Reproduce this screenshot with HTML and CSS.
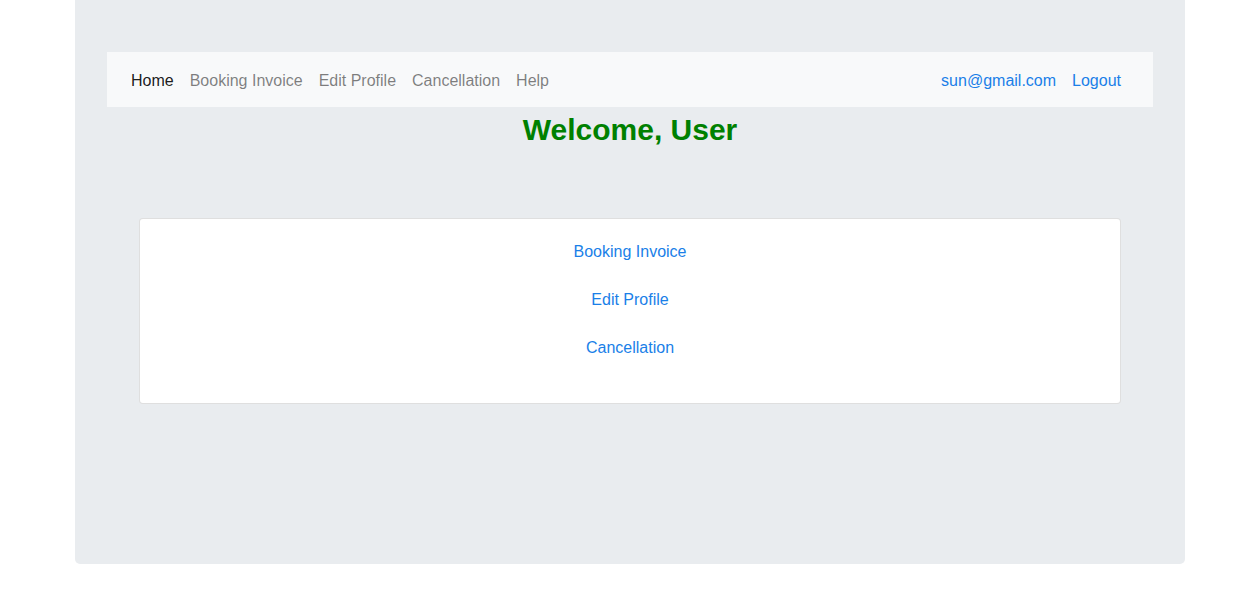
FILE: index.html
```html
<!DOCTYPE html>
<html>
<head>
<meta charset="utf-8">
<title>Welcome</title>
<link rel="stylesheet" href="styles.css">
</head>
<body>
<div class="page">
  <div class="jumbotron">
    <nav class="navbar">
      <ul class="nav-list">
        <li><a class="nav-link active" href="#">Home</a></li>
        <li><a class="nav-link" href="#">Booking Invoice</a></li>
        <li><a class="nav-link" href="#">Edit Profile</a></li>
        <li><a class="nav-link" href="#">Cancellation</a></li>
        <li><a class="nav-link" href="#">Help</a></li>
      </ul>
      <ul class="nav-list">
        <li><a class="nav-link blue" href="#">sun@gmail.com</a></li>
        <li><a class="nav-link blue" href="#">Logout</a></li>
      </ul>
    </nav>
    <h1 class="welcome">Welcome, User</h1>
    <div class="card">
      <div class="card-body">
        <a class="card-link" href="#">Booking Invoice</a>
        <a class="card-link" href="#">Edit Profile</a>
        <a class="card-link" href="#">Cancellation</a>
      </div>
    </div>
  </div>
</div>
</body>
</html>
```
FILE: styles.css
```css
* { box-sizing: border-box; }
html, body { margin: 0; padding: 0; background: #fff; }
body {
  font-family: "Liberation Sans", Arial, sans-serif;
  font-size: 16px;
  line-height: 24px;
  color: #212529;
}
.page {
  width: 1110px;
  margin-left: 75px;
}
.jumbotron {
  background: #e9ecef;
  border-radius: 0 0 5px 5px;
  padding: 52px 32px 0;
  height: 564px;
}
.navbar {
  background: #f8f9fa;
  height: 55px;
  display: flex;
  align-items: center;
  justify-content: space-between;
  padding: 2px 24px 0 16px;
}
.nav-list {
  list-style: none;
  margin: 0;
  padding: 0;
  display: flex;
}
.nav-link {
  display: block;
  padding: 8px 8px;
  color: rgba(0,0,0,0.5);
  text-decoration: none;
}
.nav-link.active { color: rgba(0,0,0,0.9); }
.nav-link.blue { color: #1a7fe8; }
.welcome {
  margin: 5px 0 0;
  text-align: center;
  color: #008000;
  font-size: 30px;
  font-weight: bold;
  line-height: 36px;
}
.card {
  margin: 70px 32px 0;
  background: #fff;
  border: 1px solid rgba(0,0,0,0.125);
  border-radius: 4px;
}
.card-body {
  padding: 21px 20px 19px;
  display: flex;
  flex-direction: column;
  align-items: center;
}
.card-link {
  display: block;
  color: #1a7fe8;
  text-decoration: none;
  line-height: 24px;
  margin-bottom: 24px;
}
```
